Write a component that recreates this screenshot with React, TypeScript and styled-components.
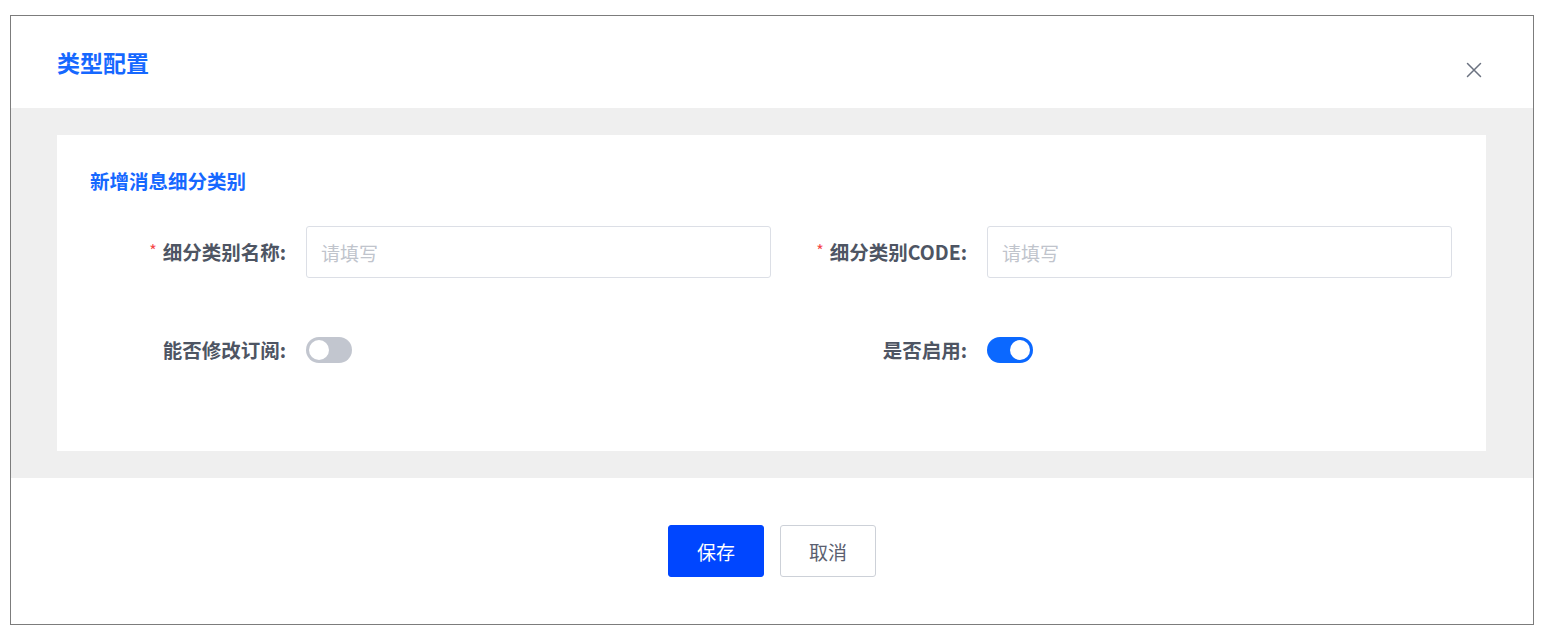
import styled, { createGlobalStyle } from 'styled-components';

const GlobalStyle = createGlobalStyle`
  html, body {
    margin: 0;
    padding: 0;
    background: #ffffff;
  }
  body {
    font-family: "Noto Sans CJK SC", "Noto Sans", "Liberation Sans", sans-serif;
  }
  * {
    box-sizing: border-box;
  }
`;

interface FieldProps {
  label: string;
  required?: boolean;
  children: React.ReactNode;
}

function Field({ label, required, children }: FieldProps) {
  return (
    <FieldRow>
      <Label>
        {required && <Star>*</Star>}
        {label}:
      </Label>
      <Control>{children}</Control>
    </FieldRow>
  );
}

function App() {
  return (
    <>
      <GlobalStyle />
      <Dialog>
        <Header>
          <Title>类型配置</Title>
          <CloseButton aria-label="关闭">
            <svg width="16" height="16" viewBox="0 0 16 16" fill="none">
              <path
                d="M1.5 1.5L14.5 14.5M14.5 1.5L1.5 14.5"
                stroke="#6b7280"
                strokeWidth="1.5"
                strokeLinecap="round"
              />
            </svg>
          </CloseButton>
        </Header>
        <Body>
          <Card>
            <SectionTitle>新增消息细分类别</SectionTitle>
            <FormGrid>
              <Field label="细分类别名称" required>
                <Input placeholder="请填写" />
              </Field>
              <Field label="细分类别CODE" required>
                <Input placeholder="请填写" />
              </Field>
              <Field label="能否修改订阅">
                <Switch $on={false}>
                  <Knob $on={false} />
                </Switch>
              </Field>
              <Field label="是否启用">
                <Switch $on>
                  <Knob $on />
                </Switch>
              </Field>
            </FormGrid>
          </Card>
        </Body>
        <Footer>
          <Button $primary>保存</Button>
          <Button>取消</Button>
        </Footer>
      </Dialog>
    </>
  );
}

export default App;

const Dialog = styled.div`
  margin: 15px 0 0 10px;
  width: 1524px;
  border: 1px solid #7c7c7c;
  background: #ffffff;
  display: flex;
  flex-direction: column;
`;

const Header = styled.div`
  height: 92px;
  display: flex;
  justify-content: space-between;
  align-items: flex-start;
  padding: 35px 51px 0 46px;
`;

const Title = styled.h2`
  margin: 0;
  font-size: 23px;
  line-height: 23px;
  font-weight: 700;
  color: #1668ff;
`;

const CloseButton = styled.button`
  margin-top: 11px;
  width: 16px;
  height: 16px;
  padding: 0;
  border: none;
  background: none;
  display: flex;
  cursor: pointer;
`;

const Body = styled.div`
  background: #efefef;
  padding: 27px 47px 27px 46px;
`;

const Card = styled.div`
  background: #ffffff;
  padding: 36px 34px 75px 33px;
`;

const SectionTitle = styled.div`
  font-size: 19.5px;
  line-height: 20px;
  font-weight: 700;
  color: #1668ff;
  margin-bottom: 35px;
`;

const FormGrid = styled.div`
  display: grid;
  grid-template-columns: 1fr 1fr;
  row-gap: 46px;
`;

const FieldRow = styled.div`
  display: grid;
  grid-template-columns: 196px 1fr;
  column-gap: 20px;
  align-items: center;
  height: 52px;
`;

const Label = styled.label`
  text-align: right;
  font-size: 19.5px;
  line-height: 24px;
  font-weight: 600;
  color: #4e5563;
  white-space: nowrap;
`;

const Star = styled.span`
  color: #f5484a;
  font-size: 16px;
  font-weight: 400;
  margin-right: 6px;
  vertical-align: top;
  position: relative;
  top: -2px;
`;

const Control = styled.div`
  display: flex;
  align-items: center;
`;

const Input = styled.input`
  width: 100%;
  height: 52px;
  border: 1px solid #dcdfe6;
  border-radius: 3px;
  padding: 0 14px;
  font-family: inherit;
  font-size: 19px;
  color: #333;
  outline: none;
  &::placeholder {
    color: #c0c4cc;
  }
`;

const Switch = styled.div<{ $on: boolean }>`
  width: 46px;
  height: 26px;
  border-radius: 13px;
  background: ${({ $on }) => ($on ? '#0b68ff' : '#c2c6cf')};
  padding: 3px;
  display: flex;
  justify-content: ${({ $on }) => ($on ? 'flex-end' : 'flex-start')};
`;

const Knob = styled.span<{ $on: boolean }>`
  width: 20px;
  height: 20px;
  border-radius: 50%;
  background: #ffffff;
`;

const Footer = styled.div`
  height: 146px;
  display: flex;
  justify-content: center;
  align-items: flex-start;
  gap: 16px;
  padding-top: 47px;
`;

const Button = styled.button<{ $primary?: boolean }>`
  width: 96px;
  height: 52px;
  border-radius: 3px;
  font-family: inherit;
  font-size: 19px;
  cursor: pointer;
  border: 1px solid ${({ $primary }) => ($primary ? '#0046ff' : '#cdd1d8')};
  background: ${({ $primary }) => ($primary ? '#0046ff' : '#ffffff')};
  color: ${({ $primary }) => ($primary ? '#ffffff' : '#5a6070')};
`;
